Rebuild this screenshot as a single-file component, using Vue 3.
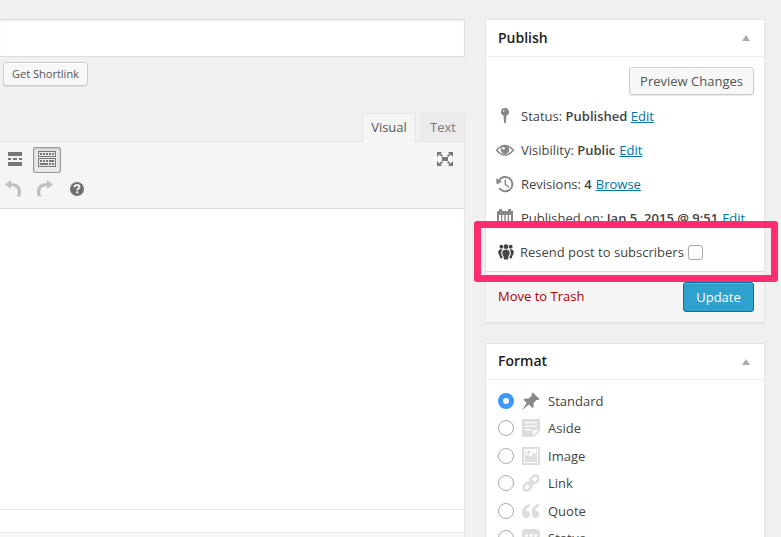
<script setup>
const formats = [
  { name: 'Standard', icon: 'pin', checked: true },
  { name: 'Aside', icon: 'aside' },
  { name: 'Image', icon: 'image' },
  { name: 'Link', icon: 'link' },
  { name: 'Quote', icon: 'quote' },
  { name: 'Status', icon: 'status' }
]
const rows = [
  { icon: 'marker', label: 'Status:', value: 'Published', action: 'Edit' },
  { icon: 'eye', label: 'Visibility:', value: 'Public', action: 'Edit' },
  { icon: 'history', label: 'Revisions:', value: '4', action: 'Browse' },
  { icon: 'calendar', label: 'Published on:', value: 'Jan 5, 2015 @ 9:51', action: 'Edit' }
]
</script>

<template>
  <div class="screen">
    <main class="editor-column">
      <div class="title-input"></div>
      <button class="btn shortlink">Get Shortlink</button>
      <div class="tabs">
        <div class="tab active">Visual</div>
        <div class="tab">Text</div>
      </div>
      <div class="toolbar">
        <div class="tool-row first">
          <svg class="icon" viewBox="0 0 20 20"><path d="M3 3h14v4H3zM3 9h3v2H3zM8 9h4v2H8zM14 9h3v2h-3zM3 13h14v4H3z" /></svg>
          <span class="pressed">
            <svg class="icon" viewBox="0 0 20 20"><path fill-rule="evenodd" d="M1 2h18v6H1zM2 3v4h16V3zM3 4h2v2H3zM6 4h2v2H6zM9 4h2v2H9zM12 4h2v2h-2zM15 4h2v2h-2zM1 9h18v9H1zM2 10v7h16v-7zM3 11h2v2H3zM6 11h2v2H6zM9 11h2v2H9zM12 11h5v2h-5zM3 14h8v2H3zM12 14h2v2h-2zM15 14h2v2h-2z" /></svg>
          </span>
          <svg class="icon expand" viewBox="0 0 20 20"><path d="M7 8h6v4H7zM2 3h5L5.600 4.400 8 6.800 6.800 8 4.400 5.600 2 8zM18 3h-5l1.400 1.400L12 6.800 13.200 8l2.400-2.400L18 8zM2 17h5l-1.400-1.400L8 13.200 6.800 12l-2.400 2.400L2 12zM18 17h-5l1.400-1.400-2.400-2.400 1.200-1.200 2.400 2.400L18 12z" /></svg>
        </div>
        <div class="tool-row second">
          <svg class="icon dim" viewBox="0 0 20 20"><path d="M8 1v3c6.500 0 10 4 10 8.500 0 2-.3 3.500-.8 5h-3.400c.7-1.500 1-3 1-4.500C14.800 9.200 12 7 8 7v3L2 5.500z" /></svg>
          <svg class="icon dim" viewBox="0 0 20 20"><path d="M12 1v3C5.500 4 2 8 2 12.500c0 2 .3 3.500.8 5h3.400c-.7-1.500-1-3-1-4.500C5.200 9.200 8 7 12 7v3l6-4.500z" /></svg>
          <svg class="icon help" viewBox="0 0 20 20"><circle cx="10" cy="10" r="7" /><path d="M7.600 8.200C7.500 6.600 8.600 6 10 6s2.400.7 2.400 2c0 1.700-2.200 1.700-2.200 3.300" fill="none" stroke="#f5f5f5" stroke-width="2" /><rect class="dot" x="9.200" y="12.300" width="2" height="2" /></svg>
        </div>
      </div>
      <div class="canvas"></div>
      <div class="path-bar"></div>
      <div class="word-bar"></div>
    </main>

    <aside class="side">
      <section class="box publish">
        <h3>Publish<i class="caret"></i></h3>
        <div class="preview"><button class="btn">Preview Changes</button></div>
        <div v-for="row in rows" :key="row.icon" class="row">
          <svg class="icon" viewBox="0 0 20 20">
            <path v-if="row.icon === 'marker'" d="M10 2a4 4 0 0 1 1.400 7.750L11 16l-1 2-1-2-.4-6.250A4 4 0 0 1 10 2zM9.300 3.700a1.600 1.600 0 0 0-1.200 2.100c.8 0 1.500-.8 1.200-2.100z" fill-rule="evenodd" />
            <template v-else-if="row.icon === 'eye'">
              <path d="M1.600 10.300q8.400-9.600 16.800 0-8.400 9.600-16.800 0z" fill="none" stroke="currentColor" stroke-width="1.500" />
              <circle cx="10" cy="9.800" r="4.200" /><circle cx="8.500" cy="8.300" r="1.300" fill="#fff" />
            </template>
            <template v-else-if="row.icon === 'history'">
              <path d="M4 6.500A7.200 7.200 0 1 1 4.300 14.200" fill="none" stroke="currentColor" stroke-width="2" />
              <path d="M1 4.500l.8 6 5.200-2.800z" /><path d="M10.300 5.500v5l3.700 2.700" fill="none" stroke="currentColor" stroke-width="1.400" />
            </template>
            <path v-else fill-rule="evenodd" d="M2 3h2V1h3v2h6V1h3v2h2v15H2V3zM4 7v9h2V7zM7.300 7v9h2V7zM10.700 7v9h2V7zM14 7v9h2V7z" />
          </svg>
          <span>{{ row.label }} <b>{{ row.value }}</b> <a :class="{ nudge: row.icon !== 'marker' }">{{ row.action }}</a></span>
        </div>
        <div class="row resend">
          <svg class="icon people" viewBox="0 0 20 20"><circle cx="10" cy="4.700" r="2.400" /><circle cx="5.300" cy="4.700" r="1.900" /><circle cx="14.700" cy="4.700" r="1.900" /><path d="M8.500 7.800h3q2.200.6 2.200 3 0 2.200-1.200 3.400l-.6 3.300H8.100l-.6-3.300q-1.200-1.200-1.200-3.400 0-2.400 2.200-3zM4.500 7.200h2Q5.200 8.600 5.200 11t1.300 3.800v1.500H4.200l-.5-2.600Q2.200 12.500 2.200 10q0-2.200 2.300-2.800zM15.500 7.200h-2q1.300 1.400 1.300 3.800t-1.300 3.800v1.500h2.300l.5-2.600q1.500-1.200 1.500-3.700 0-2.200-2.300-2.800z" /></svg>
          <label>Resend post to subscribers <i class="checkbox"></i></label>
        </div>
        <div class="actions">
          <a class="trash">Move to Trash</a>
          <button class="update">Update</button>
        </div>
        <div class="highlight"></div>
      </section>

      <section class="box format">
        <h3>Format<i class="caret"></i></h3>
        <div class="options">
          <label v-for="f in formats" :key="f.name" class="option">
            <i class="radio" :class="{ checked: f.checked }"></i>
            <svg class="icon" :class="{ strong: f.checked }" viewBox="0 0 20 20">
              <path v-if="f.icon === 'pin'" d="M11.800 1.400l6.700 6.700-1.200 1.200-1.500-.5-3.300 3.300.2 3.500-1.300 1.300-3.400-3.500L1 19l4.700-7-3.200-3.200 1.200-1.200 3.700.2 3.400-3.400-.3-1.700z" />
              <path v-else-if="f.icon === 'aside'" fill-rule="evenodd" d="M1 1h18v12l-6 6H1zM4 4v1.300h12V4zM4 7.500v1.300h12V7.500zM4 11v1.300h7V11zM12 12v5.500l5.500-5.500z" />
              <path v-else-if="f.icon === 'image'" fill-rule="evenodd" d="M1 1h18v18H1zM3 3v14h14V3zM4 4.500h1V10l2-2 3 3 3-5 2 3V4.500h1V16H4zM8 4.200a1.700 1.700 0 1 1-.1 0z" />
              <g v-else-if="f.icon === 'link'" fill="none" stroke="currentColor" stroke-width="2.500"><rect x="9" y="3.500" width="9" height="6" rx="3" transform="rotate(-45 13.500 6.500)" /><rect x="2" y="10.500" width="9" height="6" rx="3" transform="rotate(-45 6.500 13.500)" /><path d="M7.500 12.500l5-5" /></g>
              <path v-else-if="f.icon === 'quote'" d="M8.500 3C4 4 1 7.500 1 12c0 3 1.700 5 4.200 5A3.800 3.800 0 0 0 9 13.200C9 11 7.500 9.500 5 9.700 5.200 7.500 6.700 6 9 5zM17.500 3C13 4 10.500 7.500 10.500 12c0 3 1.700 5 4 5a3.800 3.800 0 0 0 3.800-3.800c0-2.200-1.500-3.700-4-3.500.2-2.200 1.700-3.700 4-4.700z" />
              <path v-else fill-rule="evenodd" d="M5 1h10q4 0 4 4v5q0 4-4 4h-3l-5 5v-5H5q-4 0-4-4V5q0-4 4-4zM5.500 6a1.500 1.500 0 1 0 .1 0zM10 6a1.500 1.500 0 1 0 .1 0zM14.500 6a1.500 1.500 0 1 0 .1 0z" />
            </svg>
            <span>{{ f.name }}</span>
          </label>
        </div>
      </section>
    </aside>
  </div>
</template>

<style>
html, body { overflow: hidden; }
</style>

<style scoped>
* { box-sizing: border-box; }
.screen { display: grid; grid-template-columns: 465px 280px; column-gap: 20px; width: 781px; height: 537px; overflow: hidden; padding-top: 19px; background: #f0f0f0; color: #444; font: 13px/20px "Open Sans", sans-serif; }
.editor-column { display: flex; flex-direction: column; height: 518px; }
.title-input { height: 38px; background: #fff; border: 1px solid #ddd; border-left: 0; box-shadow: inset 0 1px 2px rgba(0,0,0,.07); }
.btn { font: 13px/26px "Open Sans", sans-serif; color: #555; background: #f7f7f7; border: 1px solid #ccc; border-radius: 3px; box-shadow: inset 0 1px 0 #fff, 0 1px 0 rgba(0,0,0,.08); padding: 0; white-space: nowrap; }
.shortlink { width: 85px; height: 24px; margin: 5px 0 0 3px; font-size: 11px; line-height: 22px; }
.tabs { display: flex; justify-content: flex-end; gap: 5px; height: 28px; margin-top: 27px; }
.tab { width: 44px; height: 28px; border: 1px solid #e5e5e5; border-bottom: 0; background: #ebebeb; color: #777; text-align: center; line-height: 27px; }
.tab.active { width: 54px; height: 29px; position: relative; background: #f5f5f5; color: #555; }
.toolbar { height: 68px; border: 1px solid #e5e5e5; border-left: 0; border-bottom-color: #ddd; background: #f5f5f5; color: #777; }
.icon { width: 20px; height: 20px; flex: none; fill: currentColor; display: block; }
.tool-row { display: flex; align-items: center; }
.first { height: 34px; padding-left: 5px; }
.pressed { width: 28px; height: 26px; padding: 1px 3px; margin: 2px 0 0 8px; border: 1px solid #999; border-radius: 2px; background: #ebebeb; box-shadow: inset 0 1px 3px rgba(0,0,0,.2); color: #777; }
.expand { margin-left: auto; margin-right: 9px; }
.second { height: 26px; padding-left: 3px; gap: 12px; }
.dim { color: #bfbfbf; }
.help { color: #707070; }
.dot { fill: #f5f5f5; }
.canvas { height: 300px; background: #fff; border-right: 1px solid #e5e5e5; }
.path-bar { height: 23px; background: #fff; border: 1px solid #e5e5e5; border-width: 1px 1px 0 0; }
.word-bar { height: 5px; background: #f7f7f7; border: 1px solid #e5e5e5; border-width: 1px 1px 0 0; }
.box { background: #fff; border: 1px solid #e5e5e5; box-shadow: 0 1px 1px rgba(0,0,0,.04); }
.publish { position: relative; height: 304px; }
h3 { display: flex; justify-content: space-between; align-items: center; height: 37px; margin: 0; padding: 0 14px 0 12px; border-bottom: 1px solid #eee; color: #222; font-size: 14px; line-height: 20px; font-weight: 600; }
.caret { width: 0; border: solid transparent; border-width: 0 4px 6px; border-bottom-color: #aaa; }
.preview { display: flex; justify-content: flex-end; padding: 10px 10px 0; height: 42px; }
.preview .btn { width: 125px; height: 28px; }
.row { display: flex; align-items: center; gap: 6px; height: 34px; padding-left: 9px; white-space: nowrap; }
.row .icon { color: #888; }
.row b { font-weight: 600; }
.row a { color: #0073aa; text-decoration: underline; }
.row .nudge { margin-left: .6px; }
.resend { height: 36px; padding: 0 0 2px 10px; gap: 4px; }
.resend .people { color: #444; }
.resend label { display: flex; align-items: center; gap: 4px; }
.checkbox { width: 15px; height: 15px; border: 1px solid #aaa; border-radius: 3px; background: #fff; }
.actions { display: flex; justify-content: space-between; align-items: center; height: 51px; border-top: 1px solid #ddd; background: #f5f5f5; padding: 0 10px 0 12px; }
.trash { color: #a00; padding-bottom: 2px; }
.update { width: 71px; height: 30px; padding: 0; font: 500 13px/28px "Open Sans", sans-serif; color: #fff; background: #2ea2cc; border: 1px solid #0074a2; border-radius: 3px; box-shadow: inset 0 1px 0 rgba(120,200,230,.5); }
.highlight { position: absolute; left: -12px; top: 201px; width: 304px; height: 61px; border: 7px solid #ff2d6f; border-radius: 3px; }
.format { height: 220px; margin-top: 20px; }
.format h3 { height: 36px; padding-bottom: 2px; }
.format .caret { position: relative; top: 1px; }
.options { padding-top: 7px; }
.option { display: flex; align-items: center; height: 27.500px; padding-left: 12px; }
.option .icon { margin: 0 7px 0 7px; color: #ddd; }
.option .icon.strong { color: #888; }
.radio { width: 16px; height: 16px; border: 1px solid #aaa; border-radius: 50%; background: #fff; }
.radio.checked { border: 5px solid #3b99fc; }
</style>
